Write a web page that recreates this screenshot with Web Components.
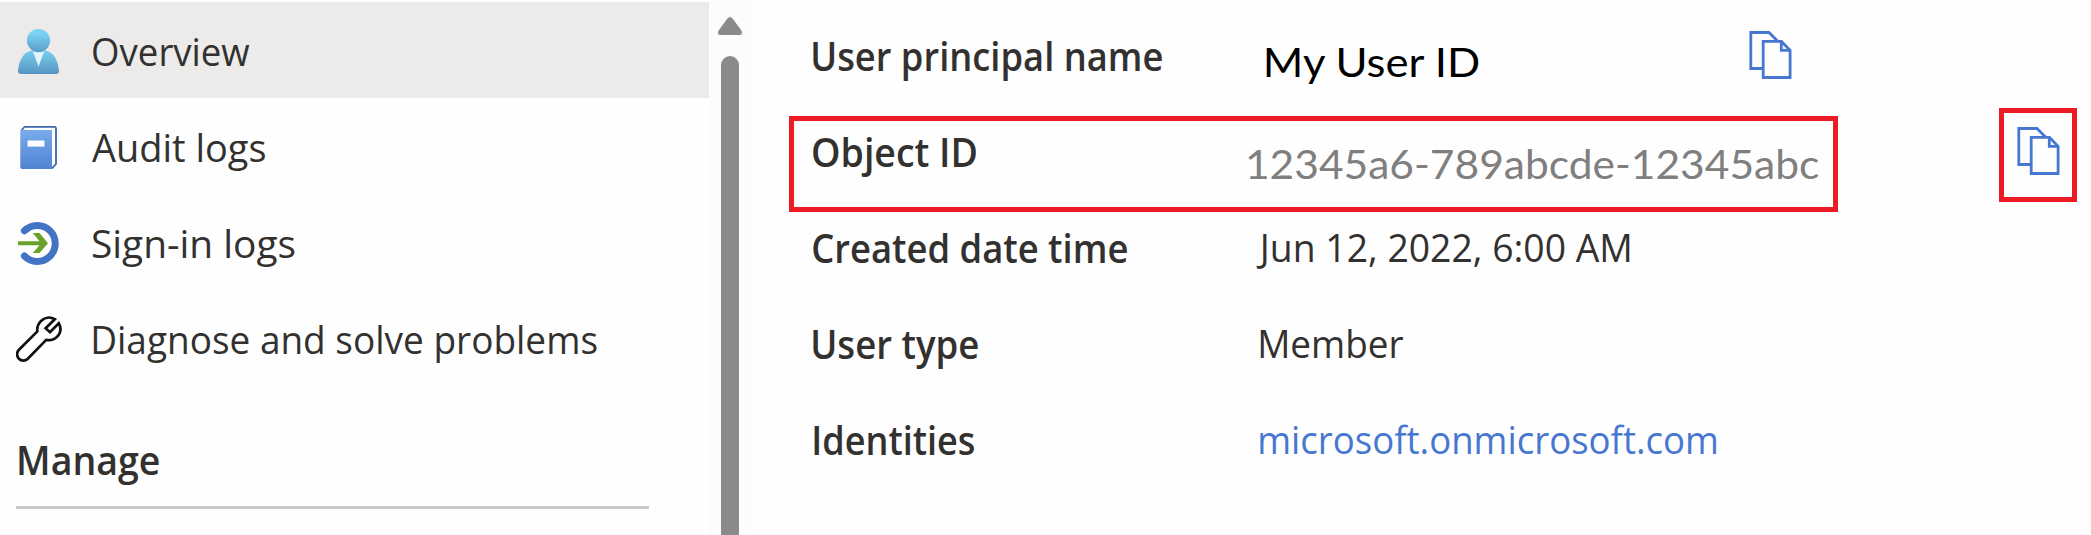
<!DOCTYPE html>
<html lang="en">
<head>
<meta charset="utf-8">
<title>User overview</title>
<style>
html,body{margin:0;height:535px;overflow:hidden;background:#fefefe}
body{font:39px "Open Sans","Noto Sans",sans-serif;color:#323130}
</style>
</head>
<body>
<user-page></user-page>
<script>
const define=(name,html,setup)=>{
  const t=document.createElement('template');
  t.innerHTML=html;
  customElements.define(name,class extends HTMLElement{
    constructor(){super();this.attachShadow({mode:'open'}).append(t.content.cloneNode(true));}
    connectedCallback(){if(setup)setup(this,this.shadowRoot);}
  });
};

// Text scaled horizontally so that its ink spans the "ink" width, starting at the host's left edge
define('fit-text',`<style>
:host{display:block;white-space:nowrap;line-height:96px;width:0}
span{display:inline-block;transform-origin:0 50%;white-space:pre}
</style><span><slot></slot></span>`,(el,root)=>{
  const cs=getComputedStyle(el),ctx=document.createElement('canvas').getContext('2d');
  ctx.font=`${cs.fontWeight} ${cs.fontSize} ${cs.fontFamily}`;
  const m=ctx.measureText(el.textContent);
  const s=+el.getAttribute('ink')/(m.actualBoundingBoxLeft+m.actualBoundingBoxRight);
  root.querySelector('span').style.transform=`translateX(${m.actualBoundingBoxLeft*s}px) scaleX(${s})`;
});

const icons={
user:`<defs><linearGradient id="h" x2="0" y2="1"><stop offset=".2" stop-color="#7bd2f3"/><stop offset="1" stop-color="#5a9cc6"/></linearGradient><linearGradient id="b" x2="0" y2="1"><stop offset="0" stop-color="#78cdef"/><stop offset="1" stop-color="#5796c2"/></linearGradient></defs>
<path fill="url(#b)" d="M15.5 24.5H29.5C37.5 26 42 34.5 43 44.5Q43.2 48 39.8 48H5.2Q1.8 48 2 44.5C3 34.5 7.5 26 15.5 24.5Z"/><path fill="#e6f5fc" d="M16.8 25Q22.5 27.8 28.3 25L22.5 40.5Z"/><circle cx="22.5" cy="14.5" r="11.6" fill="url(#h)"/>`,
book:`<defs><linearGradient id="k" x2="0" y2="1"><stop stop-color="#79aaec"/><stop offset="1" stop-color="#5084d3"/></linearGradient></defs>
<path d="M5.5 8.5L8.5 4.8H38.5Q40 4.8 40 6.3V42L36 46.3" fill="#fff" stroke="#3f66a8" stroke-width="1.8"/><path fill="url(#k)" d="M4.3 8H36V47H6Q4.3 47 4.3 45.3Z"/><path fill="#fff" d="M11.6 18.5H28.4V24.6H11.6Z"/>`,
signin:`<path d="M8.4 12.8A18 18 0 1 1 8.4 38" fill="none" stroke="#4273c4" stroke-width="7" stroke-linecap="round"/><path fill="#6aa229" d="M16.7 15H23.5L32 25.3 23.5 35H16.7L23.5 27.3H2V23.2H23.5Z"/>`,
wrench:`<path d="M38.8 5.2C34 2.6 28.5 3.6 25 7C21.8 10.2 20.9 14 21.4 17.4L3 35.8A6.2 6.2 0 0 0 11.8 44.8L30.2 25.9C34 26.6 38.2 25.7 41.2 22.6C44.9 18.8 45.3 13.8 42.8 9.2L34 18.2L29.6 14.2Z" fill="#fff" stroke="#111" stroke-width="2.7"/>`
};
define('nav-item',`<style>
:host{display:flex;height:96px;padding-left:16px;align-items:flex-start}
:host([selected]){background:#ecebe9}
.i{width:76px;height:96px;display:flex;align-items:center}
fit-text{margin-top:.5px}
</style><div class="i"><svg width="48" height="48"></svg></div><slot></slot>`,(el,root)=>{
  root.querySelector('svg').innerHTML=icons[el.getAttribute('icon')];
});

define('side-nav',`<style>
:host{display:block;width:709px}
h2{margin:26px 0 0 19px;font:inherit;font-weight:600;height:94px}
hr{margin:0 0 0 16px;width:633px;height:3px;border:0;background:#cacaca}
nav fit-text{margin-top:1px}
</style>
<nav>
<nav-item selected icon="user"><fit-text ink="156.5" style="margin-left:.5px">Overview</fit-text></nav-item>
<nav-item icon="book"><fit-text ink="173" style="margin-left:-.5px">Audit logs</fit-text></nav-item>
<nav-item icon="signin"><fit-text ink="201.5" style="margin-left:.5px">Sign-in logs</fit-text></nav-item>
<nav-item icon="wrench"><fit-text ink="503.5" style="margin-left:1px">Diagnose and solve problems</fit-text></nav-item>
</nav>
<h2><fit-text ink="140" style="margin-left:-.5px">Manage</fit-text></h2><hr>`);

define('scroll-bar',`<style>
:host{display:flex;flex-direction:column;align-items:center;width:42px;background:#fcfcfc}
svg{margin-top:15px}
div{width:18px;flex:1;margin-top:21px;border-radius:9px 9px 0 0;background:#8a8a8a}
</style><svg width="24" height="18"><path fill="#8a8a8a" d="M9.2 1.8Q12 -1.6 14.8 1.8L23.2 13.2Q25.4 18 21.5 18H2.5Q-1.4 18 .8 13.2Z"/></svg><div></div>`);

define('copy-icon',`<style>:host{display:block;height:48px}svg{display:block}</style>
<svg width="44" height="48" fill="none" stroke="#4777d0" stroke-width="2.8"><path d="M13 37.5H1.8V1.5H20L28.5 10"/><path d="M14.2 10.4H32.5L41.1 19.2V46.5H14.2Z"/><path d="M32.3 10.4V19.3H41"/></svg>`);

define('detail-row',`<style>
:host{display:grid;grid-template-columns:446px 1fr;height:96px;position:relative}
.l{font-weight:600;padding-top:1px}
</style><div class="l"><slot name="label"></slot></div><slot></slot>`);

define('high-light',`<style>:host{display:block;position:absolute;box-sizing:border-box;border:5px solid #ed1c24}</style>`);

define('user-details',`<style>
:host{display:block;padding:5px 0 0 61px;box-sizing:border-box}
.v{display:flex;align-items:flex-start}
.c{font-family:Lato,sans-serif;font-size:41.5px}
a{color:#4777d0;text-decoration:none}
</style>
<detail-row><fit-text slot="label" ink="349" style="margin-left:1.3px">User principal name</fit-text>
<div class="v"><fit-text class="c" ink="214.5" style="margin:6px 483px 0 8px;color:#000">My User ID</fit-text><copy-icon style="margin-top:24px"></copy-icon></div></detail-row>
<detail-row><fit-text slot="label" ink="163.5" style="margin-left:.5px">Object ID</fit-text>
<div class="v"><fit-text class="c" ink="570.5" style="margin:12px 769px 0 -10px;color:#7f7f7f">12345a6-789abcde-12345abc</fit-text><copy-icon style="margin-top:24px"></copy-icon></div>
<high-light style="left:-23px;top:13px;width:1049px;height:96px"></high-light><high-light style="left:1187px;top:5px;width:78px;height:94px"></high-light></detail-row>
<detail-row><fit-text slot="label" ink="314" style="margin-left:.5px">Created date time</fit-text><div><fit-text ink="374" style="margin-left:-2px">Jun 12, 2022, 6:00 AM</fit-text></div></detail-row>
<detail-row><fit-text slot="label" ink="165" style="margin-left:1.3px">User type</fit-text><div><fit-text ink="143.5" style="margin-left:2px">Member</fit-text></div></detail-row>
<detail-row><fit-text slot="label" ink="160.5" style="margin-left:2px">Identities</fit-text><div><a><fit-text ink="456" style="margin-left:2px">microsoft.onmicrosoft.com</fit-text></a></div></detail-row>`);

define('user-page',`<style>:host{display:flex;height:533px;padding-top:2px;overflow:hidden}
user-details,side-nav,scroll-bar{flex:none}
user-details{width:1340px}</style><side-nav></side-nav><scroll-bar></scroll-bar><user-details></user-details>`);
</script>
</body>
</html>
